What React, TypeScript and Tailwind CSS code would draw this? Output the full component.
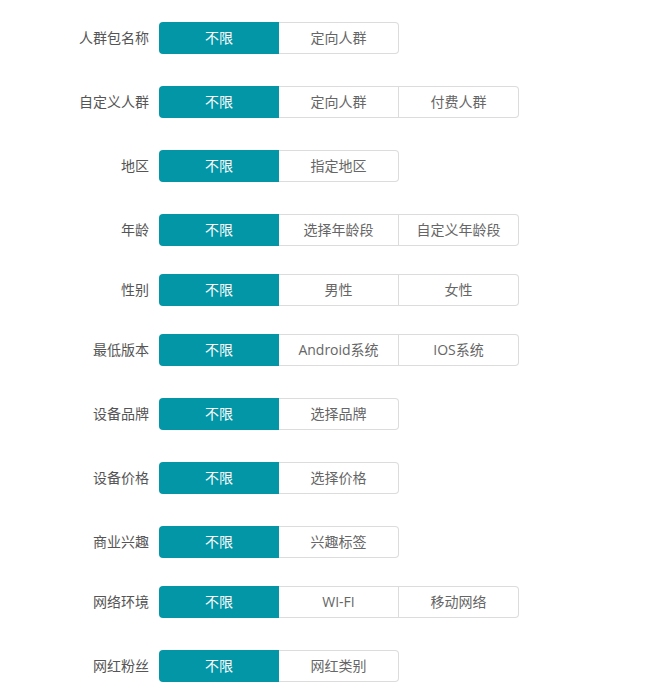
import React from "react";

const rows: { label: string; opts: string[]; mt: string }[] = [
  { label: "人群包名称", opts: ["定向人群"], mt: "mt-[22px]" },
  { label: "自定义人群", opts: ["定向人群", "付费人群"], mt: "mt-[32px]" },
  { label: "地区", opts: ["指定地区"], mt: "mt-[32px]" },
  { label: "年龄", opts: ["选择年龄段", "自定义年龄段"], mt: "mt-[32px]" },
  { label: "性别", opts: ["男性", "女性"], mt: "mt-[28px]" },
  { label: "最低版本", opts: ["Android系统", "IOS系统"], mt: "mt-[28px]" },
  { label: "设备品牌", opts: ["选择品牌"], mt: "mt-[32px]" },
  { label: "设备价格", opts: ["选择价格"], mt: "mt-[32px]" },
  { label: "商业兴趣", opts: ["兴趣标签"], mt: "mt-[32px]" },
  { label: "网络环境", opts: ["WI-FI", "移动网络"], mt: "mt-[28px]" },
  { label: "网红粉丝", opts: ["网红类别"], mt: "mt-[32px]" },
];

export default function App() {
  return (
    <div
      className="w-[650px] h-[697px] bg-white overflow-hidden"
      style={{ fontFamily: '"Open Sans", "Noto Sans CJK SC", sans-serif' }}
    >
      {rows.map((r, i) => (
        <div key={i} className={`flex items-center h-[32px] ${r.mt}`}>
          <div className="w-[149px] text-right text-[14px] leading-[20px] text-[#555] pb-[1px]">{r.label}</div>
          <div className="ml-[10px] flex">
            <div className="w-[120px] h-[32px] flex items-center justify-center bg-[#0396a6] text-white text-[14px] leading-[20px] pb-[1px] rounded-l-[4px]">
              不限
            </div>
            {r.opts.map((o, j) => (
              <div
                key={j}
                className={`w-[120px] h-[32px] flex items-center justify-center bg-white text-[#666] text-[14px] leading-[20px] pb-[1px] border border-[#dcdcdc] border-l-0 ${
                  j === r.opts.length - 1 ? "rounded-r-[4px]" : ""
                } ${j > 0 ? "border-l border-l-[#dcdcdc]" : ""}`}
              >
                {o}
              </div>
            ))}
          </div>
        </div>
      ))}
    </div>
  );
}
